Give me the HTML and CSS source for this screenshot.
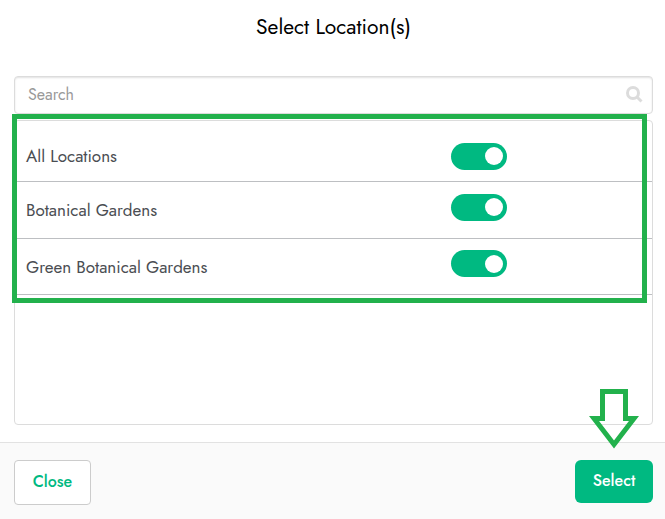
FILE: index.html
```html
<!DOCTYPE html>
<html lang="en">

<head>
  <meta charset="UTF-8">
  <meta name="viewport" content="width=device-width, initial-scale=1.0">
  <title>Select Location(s)</title>
  <link rel="stylesheet" href="styles.css">
</head>

<body>
  <header class="modal-header">
    <h1>Select Location(s)</h1>
  </header>

  <main class="modal-body">
    <div class="search">
      <input type="text" class="search-input" placeholder="Search" aria-label="Search">
      <svg class="search-icon" viewBox="0 0 17 17" aria-hidden="true">
        <circle cx="7" cy="7" r="5.5" />
        <path d="M11 11l4.5 4.5" />
      </svg>
    </div>

    <div class="list">
      <div class="rows">
        <div class="row">
          <label for="loc-all">All Locations</label>
          <input type="checkbox" class="toggle" id="loc-all" checked>
        </div>
        <div class="row">
          <label for="loc-botanical">Botanical Gardens</label>
          <input type="checkbox" class="toggle" id="loc-botanical" checked>
        </div>
        <div class="row">
          <label for="loc-green">Green Botanical Gardens</label>
          <input type="checkbox" class="toggle" id="loc-green" checked>
        </div>
        <div class="highlight"></div>
      </div>
    </div>
  </main>

  <footer class="modal-footer">
    <button type="button" class="btn btn-close">Close</button>
    <div class="select-wrap">
      <svg class="arrow" viewBox="0 0 50 60" aria-hidden="true">
        <path d="M13.5 2.5H36.5V29.5H45L25 55.5 5 29.5H13.5Z" />
      </svg>
      <button type="button" class="btn btn-select">Select</button>
    </div>
  </footer>
</body>

</html>
```

FILE: styles.css
```css
:root {
  --green: #00b981;
  --marker: #22b14c;
  --border: #dcdcdc;
  --text: #4a4d52;
}

* {
  box-sizing: border-box;
}

body {
  display: flex;
  flex-direction: column;
  min-height: 100vh;
  margin: 0;
  background-color: #fff;
  color: var(--text);
  font-family: Jost, Lato, sans-serif;
  font-size: 17px;
}

.modal-header {
  padding: 13px 12px 35px 14px;
  text-align: center;
}

h1 {
  margin: 0;
  color: #000;
  font-size: 21px;
  font-weight: 400;
  line-height: 28px;
}

.modal-body {
  display: flex;
  flex: 1;
  flex-direction: column;
  gap: 6px;
  padding: 0 12px 17px 14px;
}

/* search box */
.search {
  position: relative;
}

.search-input {
  display: block;
  width: 100%;
  height: 38px;
  padding: 0 40px 1px 13px;
  border: 1px solid var(--border);
  border-radius: 4px;
  box-shadow: inset 0 1px 2px rgba(0, 0, 0, 0.12);
  font-family: inherit;
  font-size: 16px;
}

.search-input::placeholder {
  color: #999;
}

.search-icon {
  position: absolute;
  top: 10px;
  right: 10px;
  width: 17px;
  height: 17px;
  fill: none;
  stroke: #dcdcdc;
  stroke-width: 3;
}

/* locations */
.list {
  flex: 1;
  border: 1px solid var(--border);
  border-radius: 4px;
}

.rows {
  position: relative;
}

.row {
  display: grid;
  grid-template-columns: 2fr 1fr;
  align-items: center;
  min-height: 57px;
  padding-left: 11px;
  border-bottom: 1px solid #bdbfc2;
}

.row:first-child {
  min-height: 61px;
  padding-top: 10px;
}

.row:nth-child(3) {
  min-height: 56px;
}

.row .toggle {
  margin: 0 0 6px 8px;
}

.row:first-child .toggle {
  margin-bottom: 0;
}

.toggle {
  display: flex;
  align-items: center;
  justify-content: flex-end;
  width: 56px;
  height: 27px;
  padding: 0 4px;
  border-radius: 14px;
  background-color: #bbb;
  appearance: none;
}

.toggle::before {
  width: 18px;
  height: 18px;
  border-radius: 50%;
  background-color: #fff;
  content: "";
}

.toggle:checked {
  background-color: var(--green);
}

.toggle:not(:checked) {
  justify-content: flex-start;
}

.highlight {
  position: absolute;
  inset: -7px 5px -8px -3px;
  border: 5px solid var(--marker);
  pointer-events: none;
}

/* footer */
.modal-footer {
  display: flex;
  align-items: flex-start;
  justify-content: space-between;
  padding: 17px 12px 14px 14px;
  border-top: 1px solid #e2e2e2;
  background-color: #fafafa;
}

.btn {
  padding: 0 6px 2px;
  border-radius: 4px;
  font-family: inherit;
  font-size: 16px;
  font-weight: 500;
}

.btn-close {
  min-width: 77px;
  height: 45px;
  border: 1px solid #ccc;
  background-color: #fff;
  color: var(--green);
}

.btn-select {
  min-width: 78px;
  height: 43px;
  border: 0;
  border-radius: 6px;
  background-color: var(--green);
  color: #fff;
}

.select-wrap {
  position: relative;
}

.arrow {
  position: absolute;
  top: -71px;
  left: 14px;
  width: 50px;
  height: 60px;
  fill: none;
  stroke: var(--marker);
  stroke-width: 5;
}
```
